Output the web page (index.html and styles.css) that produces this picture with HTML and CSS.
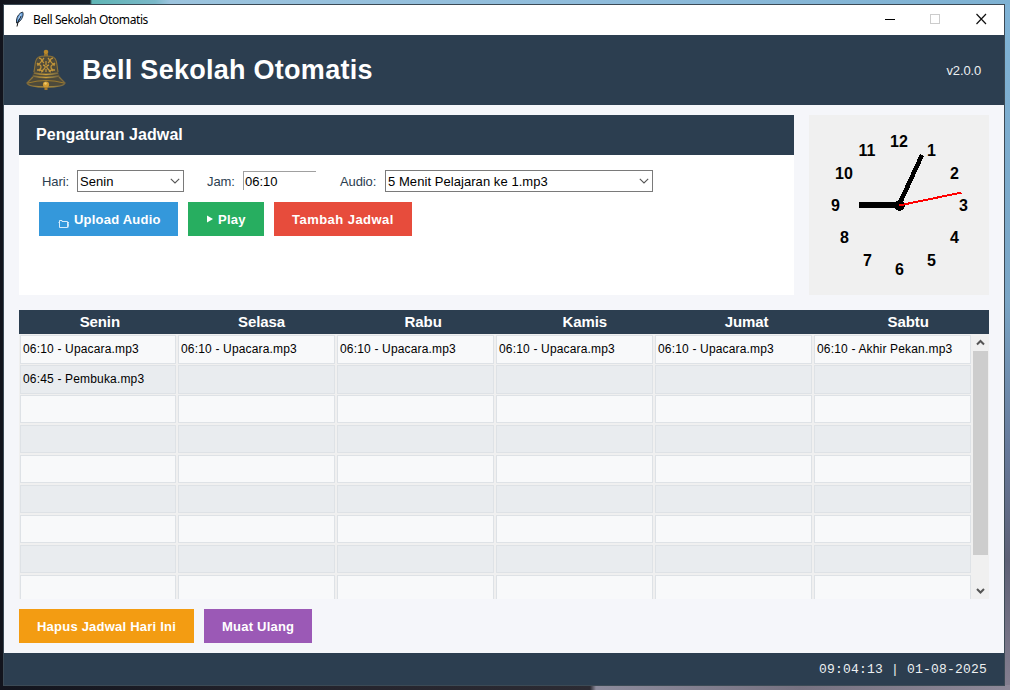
FILE: index.html
```html
<!DOCTYPE html>
<html lang="id">
<head>
<meta charset="utf-8">
<title>Bell Sekolah Otomatis</title>
<link rel="stylesheet" href="styles.css">
</head>
<body>
<div class="window">
  <div class="titlebar">
    <svg class="feather" width="12" height="16" viewBox="0 0 12 16"><path d="M2.500 12 2.500 9C3 5 5.500 2 8.500 1 10 3 8.500 7 6.500 9.500L4 11.500Z" fill="#6ca3de" stroke="#1b2530" stroke-width=".9"/><path d="M3 15.500 4 11 7 5" stroke="#111" stroke-width="1" fill="none"/><path d="M4.500 8 7 3" stroke="#b5d5f5" stroke-width="1"/></svg>
    <span class="caption">Bell Sekolah Otomatis</span>
    <svg class="controls" width="104" height="12" viewBox="0 0 104 12" fill="none" shape-rendering="crispEdges"><path d="M0 6.500H10" stroke="#000"/><path d="M45.500 1.500h9v9h-9z" stroke="#ccc"/><path d="m91.500 1 9.500 10M101 1 91.500 11" stroke="#111" stroke-width="1.200" shape-rendering="auto"/></svg>
  </div>
  <header class="header">
    <svg class="bell" width="42" height="42" viewBox="0 0 42 42">
      <defs><linearGradient id="gold"><stop stop-color="#7d6a3d"/><stop offset=".35" stop-color="#a88739"/><stop offset=".5" stop-color="#cfa23b"/><stop offset=".7" stop-color="#978040"/><stop offset="1" stop-color="#776640"/></linearGradient></defs>
      <circle cx="21" cy="3" r="2.300" fill="#b98729"/><path d="M19 5h4v3h-4z" fill="#94712f"/>
      <path d="M21 7C14 7 11 8 10 13L8.500 23C7 29 4 31 1.500 34 2 37 11 38.500 21 38.500s19-1.500 19.500-4.500C38 31 35 29 33.500 23L32 13C31 8 28 7 21 7Z" fill="#4d4a3b"/>
      <path d="M21 7C14 7 11.500 8 10.500 13L9 23M21 7c7 0 9.500 1 10.500 6L33 23" fill="none" stroke="#8d7339" stroke-width="1.100"/>
      <path d="M14 9q4 1 2 4t-4 1M28 9q-4 1-2 4t4 1M19 9q-3 3 0 5M23 9q3 3 0 5M12 16q4-1 4 2t-4 3M30 16q-4-1-4 2t4 3M18 16q4 1 1 4t-2 3M24 16q-4 1-1 4t2 3M14 22q2-2 4 1M28 22q-2-2-4 1M21 12v4M21 20v3" fill="none" stroke="#c0943a" stroke-width="1.300"/>
      <path d="M9 24q12 3 24 0M8 27q13 3 26 0" fill="none" stroke="url(#gold)" stroke-width="1.500"/>
      <path d="M8 28Q5 31 2 34c1 3 10 4 19 4s18-1 19-4q-3-3-6-6" fill="none" stroke="url(#gold)" stroke-width="1.200"/><path d="M3 34q18-5 36 0" fill="none" stroke="#a5802e" stroke-width=".9"/>
      <circle cx="21" cy="35.500" r="3.100" fill="#d29b32"/><circle cx="20.500" cy="34.500" r="1.200" fill="#eecb6d"/><path d="M19.500 38.500h3v2.500h-3z" fill="#a87a2a"/>
    </svg>
    <h1 class="title">Bell Sekolah Otomatis</h1>
    <span class="version">v2.0.0</span>
  </header>
  <main class="main">
    <div class="top">
      <section class="panel">
        <h2 class="panel-title">Pengaturan Jadwal</h2>
        <div class="fields">
          <label class="label label-day">Hari:</label>
          <div class="combo combo-day"><span>Senin</span><svg width="10" height="6" viewBox="0 0 10 6"><path d="m.8.8 4.200 4.200L9.200.8" fill="none" stroke="#555" stroke-width="1.100"/></svg></div>
          <label class="label label-time">Jam:</label>
          <div class="entry">06:10</div>
          <label class="label label-audio">Audio:</label>
          <div class="combo combo-audio"><span>5 Menit Pelajaran ke 1.mp3</span><svg width="10" height="6" viewBox="0 0 10 6"><path d="m.8.8 4.200 4.200L9.200.8" fill="none" stroke="#555" stroke-width="1.100"/></svg></div>
        </div>
        <div class="actions">
          <div class="btn blue"><svg class="folder" width="11" height="9" viewBox="0 0 11 9"><path d="M1.500 8.500v-7h2.500v1h5.500v6zM.5 3.500h1M9.500 3.500h1.500l-1 5" fill="none" stroke="#d5eafa" stroke-width="1"/></svg><span>Upload Audio</span></div>
          <div class="btn green"><svg class="play" width="6" height="8" viewBox="0 0 6 8"><path d="M0 .5 6 4 0 7.500z" fill="#fff"/></svg><span>Play</span></div>
          <div class="btn red"><span>Tambah Jadwal</span></div>
        </div>
      </section>
      <svg class="clock" width="180" height="180" viewBox="0 0 180 180">
        <g class="numerals"><text x="90" y="32">12</text><text x="122.500" y="41">1</text><text x="145.500" y="64">2</text><text x="154.500" y="96">3</text><text x="145.500" y="128">4</text><text x="122.500" y="151">5</text><text x="90.500" y="160">6</text><text x="58.500" y="151">7</text><text x="35.500" y="128">8</text><text x="26.500" y="96">9</text><text x="35" y="64">10</text><text x="58" y="41">11</text></g>
        <g shape-rendering="crispEdges"><path d="M90 90H50" stroke="#000" stroke-width="6"/><path d="M90 90 113 40" stroke="#000" stroke-width="4.500"/><circle cx="90.500" cy="90.500" r="5.300"/><path d="M90 90.500 152.500 77.500" stroke="#f00" stroke-width="2"/></g>
      </svg>
    </div>
    <section class="schedule">
      <div class="days"><span>Senin</span><span>Selasa</span><span>Rabu</span><span>Kamis</span><span>Jumat</span><span>Sabtu</span></div>
      <div class="viewport">
        <div class="grid">
          <div class="row"><p>06:10 - Upacara.mp3</p><p>06:10 - Upacara.mp3</p><p>06:10 - Upacara.mp3</p><p>06:10 - Upacara.mp3</p><p>06:10 - Upacara.mp3</p><p>06:10 - Akhir Pekan.mp3</p></div>
          <div class="row"><p>06:45 - Pembuka.mp3</p><p></p><p></p><p></p><p></p><p></p></div>
          <div class="row"><p></p><p></p><p></p><p></p><p></p><p></p></div>
          <div class="row"><p></p><p></p><p></p><p></p><p></p><p></p></div>
          <div class="row"><p></p><p></p><p></p><p></p><p></p><p></p></div>
          <div class="row"><p></p><p></p><p></p><p></p><p></p><p></p></div>
          <div class="row"><p></p><p></p><p></p><p></p><p></p><p></p></div>
          <div class="row"><p></p><p></p><p></p><p></p><p></p><p></p></div>
          <div class="row"><p></p><p></p><p></p><p></p><p></p><p></p></div>
        </div>
        <div class="scrollbar">
          <svg width="15" height="17" viewBox="0 0 15 17"><path d="m4 10.500 3.500-3.500 3.500 3.500" fill="none" stroke="#555" stroke-width="2"/></svg>
          <div class="thumb"></div>
          <svg width="15" height="17" viewBox="0 0 15 17"><path d="m4 7 3.500 3.500L11 7" fill="none" stroke="#555" stroke-width="2"/></svg>
        </div>
      </div>
    </section>
    <div class="bottom"><div class="btn orange"><span>Hapus Jadwal Hari Ini</span></div><div class="btn purple"><span>Muat Ulang</span></div></div>
  </main>
  <footer class="status">09:04:13 | 01-08-2025</footer>
</div>
</body>
</html>
```
FILE: styles.css
```css
* { box-sizing: border-box; }
body {
  margin: 0; width: 1010px; height: 690px; padding: 5px 6px 5px 4px; overflow: hidden;
  font-family: "Liberation Sans", Arial, sans-serif; color: #000;
  background:
    linear-gradient(90deg, #12141d 0, #1b222b 90px, #5fb5b5 92px, #7ab8c8 155px, #9cc4de 170px, #8fbcdb 600px, #7db1d2) 0 0 / 100% 5px no-repeat,
    linear-gradient(90deg, #12141d, #24232c 300px, #2c2b33 590px, #8d8b9c 596px, #777281 800px, #8d8898) 0 100% / 100% 5px no-repeat,
    linear-gradient(#7fb3d6, #7aa5c5 300px, #66799a 450px, #5d6075 560px, #857f90) 100% 0 / 6px 100% no-repeat,
    #12141d;
}
h1, h2, p { margin: 0; }
.window { width: 1000px; height: 680px; display: flex; flex-direction: column; background: #f5f6fa; box-shadow: 0 0 0 1px #3c4a55; }
.titlebar { height: 30px; flex: none; display: flex; align-items: center; padding: 0 14px 0 10px; background: #fff; }
.feather { margin-top: -2px; }
.caption { margin: -1px 0 0 7px; font: 12px "Noto Sans", sans-serif; letter-spacing: -.4px; }
.controls { margin-left: auto; margin-right: 1px; margin-top: -2px; }
.header { height: 70px; flex: none; display: flex; align-items: center; padding: 0 23px 0 21px; background: #2c3e50; color: #fff; }
.title { margin-left: 15px; font-size: 27px; line-height: 32px; letter-spacing: .27px; white-space: nowrap; }
.version { margin-left: auto; font-size: 13px; letter-spacing: -.15px; color: #ecf0f1; }
.main { flex: 1; min-height: 0; padding: 10px 15px; }
.top { display: flex; gap: 15px; height: 180px; }
.panel { width: 775px; background: #fff; }
.panel-title { height: 40px; padding-left: 17px; background: #2c3e50; color: #fff; font-size: 16px; line-height: 39px; letter-spacing: .06px; }
.fields { display: flex; align-items: center; height: 22px; margin-top: 15px; padding-left: 23px; font-size: 13px; white-space: nowrap; }
.label { color: #2c3e50; letter-spacing: -.1px; }
.label-day { width: 35px; }
.label-time { margin-left: 23px; width: 36px; }
.label-audio { margin-left: 24px; width: 45px; }
.combo { height: 22px; display: flex; align-items: center; justify-content: space-between; border: 1px solid #7a7a7a; padding: 0 3px 0 2px; letter-spacing: .06px; }
.combo-day { width: 107px; }
.combo-audio { width: 268px; }
.entry { width: 73px; height: 19px; margin-top: -2px; padding-left: 1px; line-height: 19px; border-top: 1px solid #a0a0a0; border-left: 1px solid #a0a0a0; }
.actions { display: flex; gap: 10px; margin: 10px 0 0 20px; }
.btn { height: 34px; display: flex; align-items: center; padding-left: 18px; color: #fff; font-size: 13px; font-weight: 700; letter-spacing: .22px; white-space: nowrap; }
.blue { width: 139px; background: #3498db; }
.green { width: 76px; background: #27ae60; }
.red { width: 138px; background: #e74c3c; letter-spacing: .46px; }
.orange { width: 175px; background: #f39c12; }
.purple { width: 108px; background: #9b59b6; }
.folder { margin: 8px 5px 0 1px; }
.play { margin: 0 5px 1px 1px; }
.clock { background: #f0f0f0; }
.numerals { font-size: 16px; font-weight: 700; text-anchor: middle; }
.schedule { margin-top: 15px; width: 970px; }
.days { height: 24px; display: grid; grid-template-columns: repeat(6, 1fr); background: #2c3e50; color: #fff; font-size: 15px; line-height: 24px; font-weight: 700; letter-spacing: -.1px; text-align: center; }
.viewport { height: 265px; display: flex; overflow: hidden; background: #f0f0f0; }
.grid { width: 954px; padding: 1px 2px 0 1px; }
.row { display: grid; grid-template-columns: 156px repeat(5, 157px); gap: 2px; height: 28px; margin-bottom: 2px; }
.row p { border: 1px solid #dee2e6; background: #f8f9fa; padding-left: 2px; font-size: 12px; line-height: 27px; letter-spacing: .17px; white-space: nowrap; }
.row:nth-child(even) p { background: #e9ecef; }
.scrollbar { width: 15px; display: flex; flex-direction: column; }
.thumb { height: 204px; background: #cdcdcd; margin-bottom: 27px; flex: none; }
.bottom { display: flex; gap: 10px; margin-top: 10px; }
.status { height: 32px; flex: none; padding-right: 17px; background: #2c3e50; color: #ecf0f1; text-align: right; font: 13px/33px "Liberation Mono", monospace; letter-spacing: .2px; }
```
